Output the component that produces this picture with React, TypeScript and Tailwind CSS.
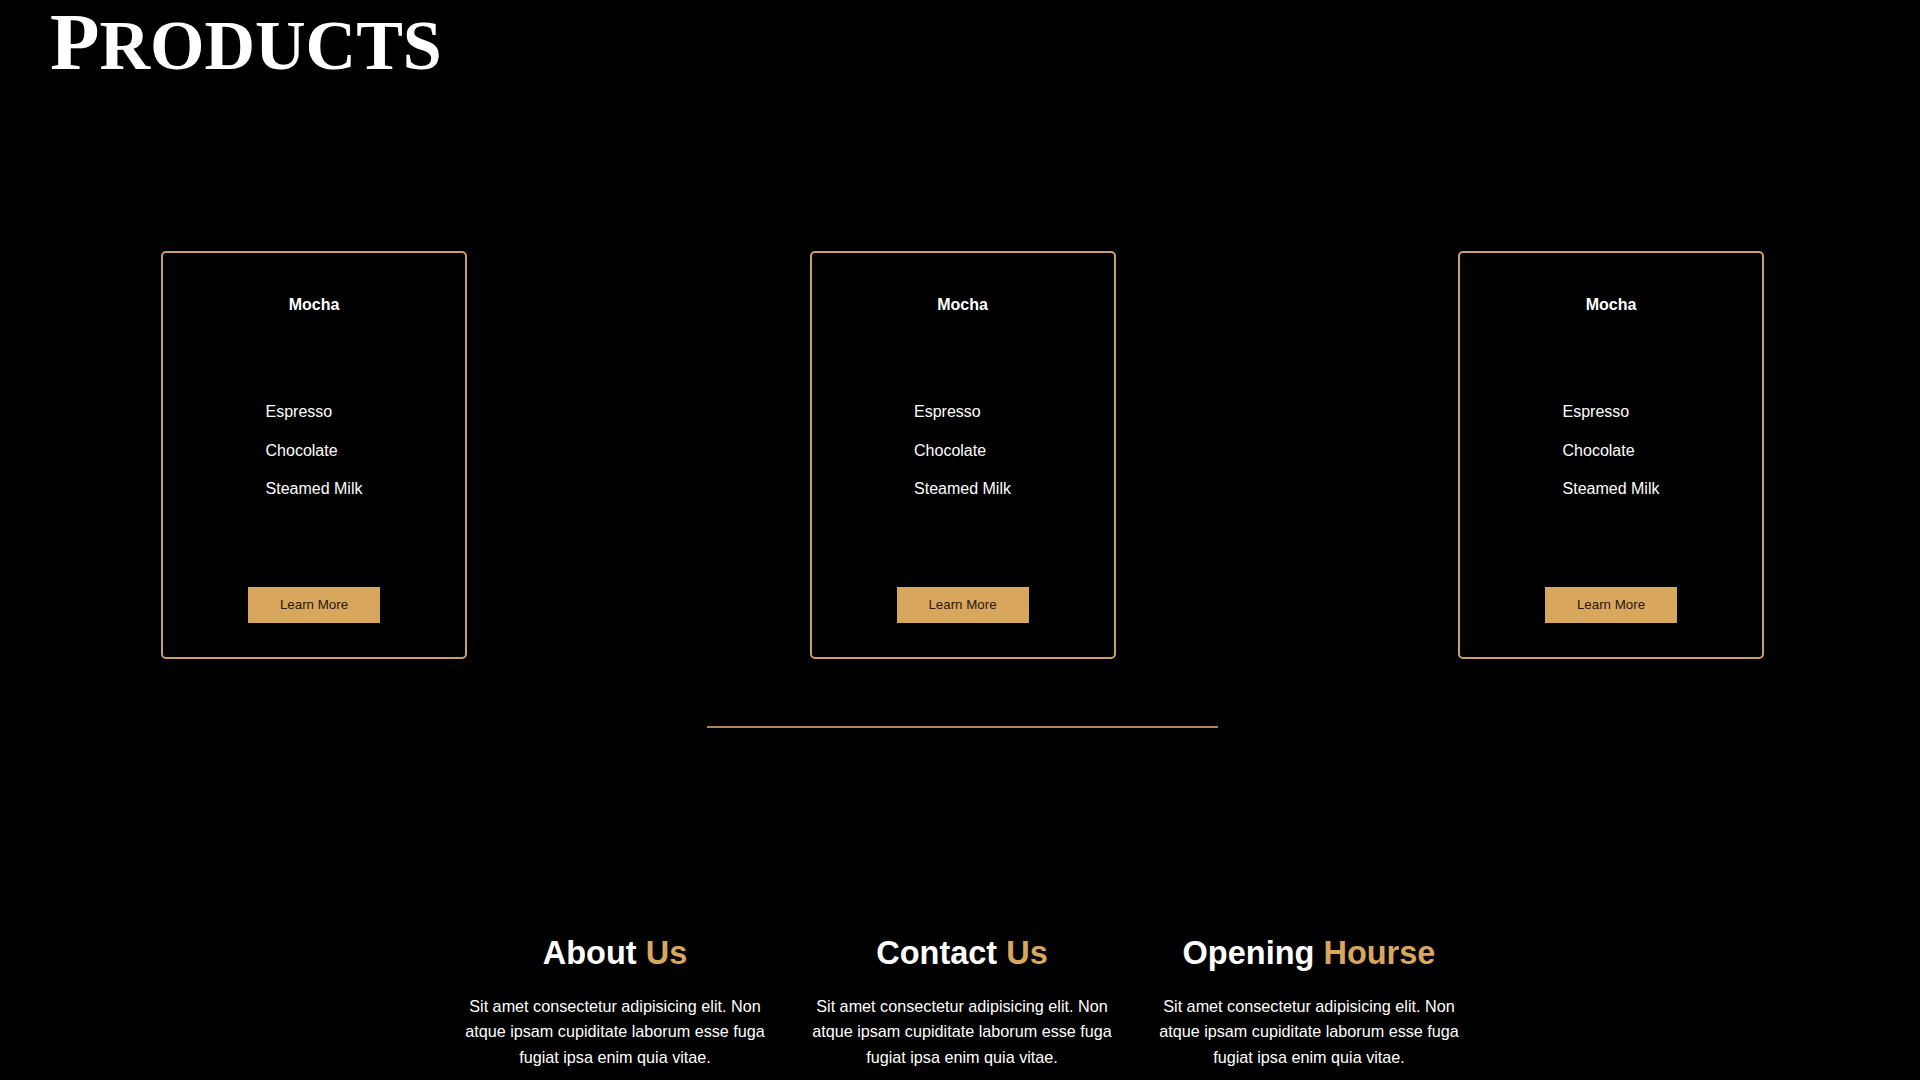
const INGREDIENTS = ['Espresso', 'Chocolate', 'Steamed Milk'];

const PRODUCTS = [{ name: 'Mocha' }, { name: 'Mocha' }, { name: 'Mocha' }];

const INFO = [
  { first: 'About', second: 'Us' },
  { first: 'Contact', second: 'Us' },
  { first: 'Opening', second: 'Hourse' },
];

const LOREM = 'Sit amet consectetur adipisicing elit. Non atque ipsam cupiditate laborum esse fuga fugiat ipsa enim quia vitae.';

function ProductCard({ name }: { name: string }) {
  return (
    <div className="w-[306px] h-[408px] border-2 border-[#c9a06a] rounded-[5px] flex flex-col items-center pt-[43px]">
      <h3 className="text-[16px] leading-[18px] font-bold text-white">{name}</h3>
      <ul className="mt-[79px] text-left">
        {INGREDIENTS.map((item) => (
          <li key={item} className="text-[16px] leading-[38.5px] text-white">
            {item}
          </li>
        ))}
      </ul>
      <button className="mt-[78px] w-[132px] h-[36px] bg-[#d9a65d] text-[13.33px] text-[#24180c]">
        Learn More
      </button>
    </div>
  );
}

export default function App() {
  return (
    <div className="min-h-screen bg-black text-white font-['Liberation_Sans',Arial,sans-serif] pb-10">
      <h1 className="pl-[50px] pt-[2px] text-[81px] leading-none font-bold text-white font-['Liberation_Serif','Times_New_Roman',serif]">
        P<span className="text-[70px]">RODUCTS</span>
      </h1>

      <section className="mt-[168px] pl-[161px] pr-[156px] flex justify-between">
        {PRODUCTS.map((p, i) => (
          <ProductCard key={i} name={p.name} />
        ))}
      </section>

      <div className="pl-[4px] mt-[67px]">
        <div className="mx-auto w-[511px] h-[2px] bg-[#a8865a]" />
      </div>

      <section className="mt-[209px] pl-[4px] flex justify-center">
        <div className="grid grid-cols-[320px_320px_320px] gap-[27px]">
          {INFO.map((col) => (
            <div key={col.first} className="text-center">
              <h2 className="text-[32.5px] leading-none font-bold">
                {col.first} <span className="text-[#d9a65d]">{col.second}</span>
              </h2>
              <p className="mt-[24px] text-[16.2px] leading-[25.6px] text-white">{LOREM}</p>
            </div>
          ))}
        </div>
      </section>
    </div>
  );
}
